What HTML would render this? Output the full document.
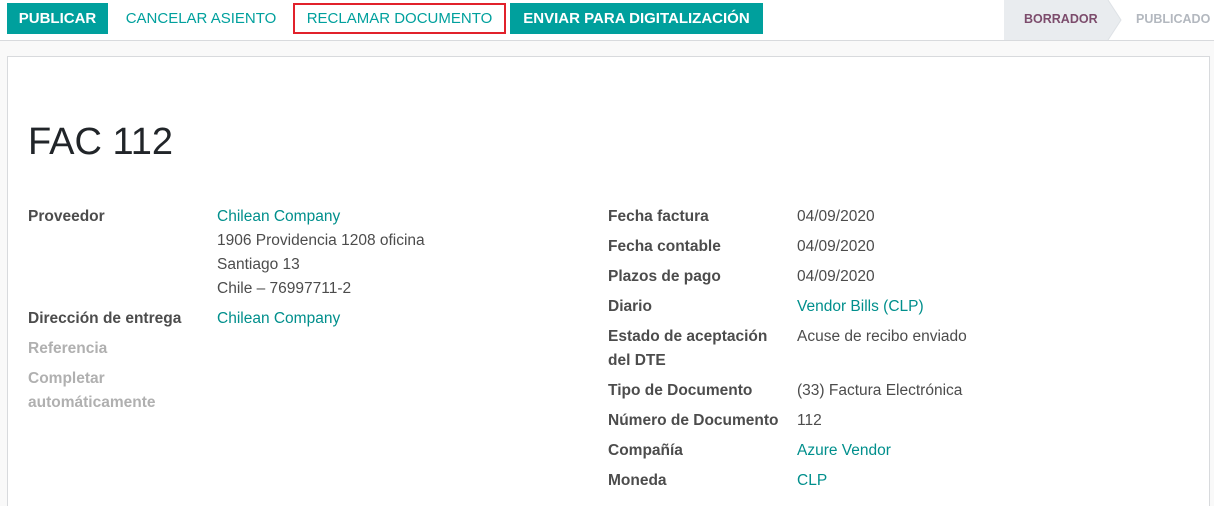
<!DOCTYPE html>
<html><head><meta charset="utf-8"><style>
*{margin:0;padding:0;box-sizing:border-box}
html,body{width:1214px;height:506px;overflow:hidden}
body{background:#fff;font-family:"Liberation Sans",sans-serif;position:relative;color:#4c4c4c}
.a{position:absolute;white-space:nowrap}
.btn{position:absolute;top:3px;height:31px;line-height:31px;font-size:15px;font-weight:bold;text-align:center}
.p{background:#00a09d;color:#fff}
.s{color:#00a09d}
.f{font-size:15.5px;line-height:24px}
.l{font-weight:bold;color:#4c4c4c}
.g{font-weight:bold;color:#b0b0b0}
.k{color:#008f8c}
</style></head><body>
<div class="btn p" style="left:7px;width:101px">PUBLICAR</div>
<div class="btn s" style="left:116px;width:170px;font-weight:normal;color:#00a09d">CANCELAR ASIENTO</div>
<div class="btn s" style="left:293px;width:213px;border:2px solid #e1212b;line-height:27px;font-weight:normal">RECLAMAR DOCUMENTO</div>
<div class="btn p" style="left:510px;width:253px">ENVIAR PARA DIGITALIZACIÓN</div>
<svg class="a" style="left:1004px;top:0" width="210" height="40"><polygon points="0,0 104,0 117,20 104,40 0,40" fill="#e9ecef"/><polyline points="104,0 117,20 104,40" fill="none" stroke="#dee2e6"/></svg>
<div class="a" style="left:1024px;top:12px;font-size:12.5px;font-weight:bold;color:#7c4c6c">BORRADOR</div>
<div class="a" style="left:1136px;top:12px;font-size:12.5px;font-weight:bold;color:#b3b8bf">PUBLICADO</div>
<div class="a" style="left:0;top:40px;width:1214px;height:466px;background:#f9f9f9;border-top:1px solid #d8dadd"></div>
<div class="a" style="left:7px;top:56px;width:1203px;height:450px;background:#fff;border:1px solid #d8dadd;border-bottom:none"></div>
<div class="a" style="left:28px;top:121px;font-size:38px;color:#212529">FAC 112</div>
<div class="a f l" style="left:28px;top:205px">Proveedor</div>
<div class="a f k" style="left:217px;top:205px">Chilean Company</div>
<div class="a f" style="left:217px;top:229px">1906 Providencia 1208 oficina</div>
<div class="a f" style="left:217px;top:253px">Santiago 13</div>
<div class="a f" style="left:217px;top:277px">Chile – 76997711-2</div>
<div class="a f l" style="left:28px;top:307px">Dirección de entrega</div>
<div class="a f k" style="left:217px;top:307px">Chilean Company</div>
<div class="a f g" style="left:28px;top:337px">Referencia</div>
<div class="a f g" style="left:28px;top:367px">Completar<br>automáticamente</div>
<div class="a f l" style="left:608px;top:205px">Fecha factura</div><div class="a f" style="left:797px;top:205px">04/09/2020</div>
<div class="a f l" style="left:608px;top:235px">Fecha contable</div><div class="a f" style="left:797px;top:235px">04/09/2020</div>
<div class="a f l" style="left:608px;top:265px">Plazos de pago</div><div class="a f" style="left:797px;top:265px">04/09/2020</div>
<div class="a f l" style="left:608px;top:295px">Diario</div><div class="a f k" style="left:797px;top:295px">Vendor Bills (CLP)</div>
<div class="a f l" style="left:608px;top:325px">Estado de aceptación<br>del DTE</div><div class="a f" style="left:797px;top:325px">Acuse de recibo enviado</div>
<div class="a f l" style="left:608px;top:379px">Tipo de Documento</div><div class="a f" style="left:797px;top:379px">(33) Factura Electrónica</div>
<div class="a f l" style="left:608px;top:409px">Número de Documento</div><div class="a f" style="left:797px;top:409px">112</div>
<div class="a f l" style="left:608px;top:439px">Compañía</div><div class="a f k" style="left:797px;top:439px">Azure Vendor</div>
<div class="a f l" style="left:608px;top:469px">Moneda</div><div class="a f k" style="left:797px;top:469px">CLP</div>
</body></html>
